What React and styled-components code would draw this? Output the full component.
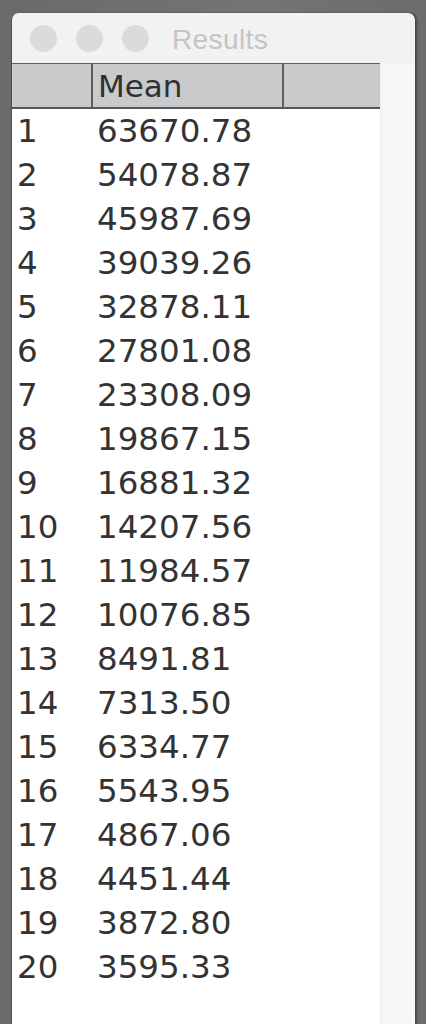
import React from "react";
import styled, { createGlobalStyle } from "styled-components";

const Global = createGlobalStyle`
  html, body { margin: 0; padding: 0; }
  body {
    background: linear-gradient(90deg, #6a6a6a 0%, #747474 60%, #6c6c6c 100%);
    height: 1024px;
    overflow: hidden;
    font-family: "DejaVu Sans", Verdana, sans-serif;
  }
`;

const Stage = styled.div`
  height: 1024px;
  padding: 13px 11px 0 11px;
  box-sizing: border-box;
`;

const Window = styled.div`
  width: 404px;
  height: 1011px;
  background: #f2f2f2;
  border-radius: 7px 7px 0 0;
  border-left: 1px solid #4e4e4e;
  box-shadow: 2px 0 2px rgba(40, 40, 40, 0.55);
  display: flex;
  flex-direction: column;
  overflow: hidden;
  box-sizing: border-box;
`;

const TitleBar = styled.div`
  height: 50px;
  display: flex;
  align-items: center;
  padding-left: 18px;
  gap: 19px;
  flex-shrink: 0;
`;

const Light = styled.span`
  width: 27px;
  height: 27px;
  border-radius: 50%;
  background: #dbdbdc;
  flex-shrink: 0;
`;

const Title = styled.span`
  margin-left: 4px;
  font-family: "Liberation Sans", Arial, sans-serif;
  font-size: 28px;
  letter-spacing: 0.4px;
  color: #c4c4c5;
  line-height: 1;
  padding-top: 4px;
`;

const Body = styled.div`
  flex: 1;
  display: flex;
  min-height: 0;
`;

const Table = styled.div`
  width: 368px;
  background: #ffffff;
  display: flex;
  flex-direction: column;
`;

const Strip = styled.div`
  flex: 1;
  background: #f6f6f6;
  border-left: 1px solid #ececec;
`;

const Header = styled.div`
  height: 46px;
  box-sizing: border-box;
  display: grid;
  grid-template-columns: 79px 2px 189px 2px 1fr;
  background: #c8cacc;
  border-top: 1px solid #5e6062;
  border-bottom: 2px solid #55585a;
`;

const Divider = styled.div`
  background: #5c5e60;
`;

const HeadCell = styled.div`
  display: flex;
  align-items: center;
  padding-left: 5px;
  font-size: 31px;
  color: #2f3032;
`;

const Row = styled.div`
  height: 44px;
  display: grid;
  grid-template-columns: 85px 1fr;
  align-items: center;
  font-size: 32.5px;
  color: #333333;
  line-height: 1;
`;

const Idx = styled.span`
  padding-left: 5px;
`;

const Val = styled.span``;

const data = [
  "63670.78", "54078.87", "45987.69", "39039.26", "32878.11",
  "27801.08", "23308.09", "19867.15", "16881.32", "14207.56",
  "11984.57", "10076.85", "8491.81", "7313.50", "6334.77",
  "5543.95", "4867.06", "4451.44", "3872.80", "3595.33",
];

export default function App() {
  return (
    <>
      <Global />
      <Stage>
        <Window>
          <TitleBar>
            <Light />
            <Light />
            <Light />
            <Title>Results</Title>
          </TitleBar>
          <Body>
            <Table>
              <Header>
                <HeadCell />
                <Divider />
                <HeadCell>Mean</HeadCell>
                <Divider />
                <HeadCell />
              </Header>
              {data.map((v, i) => (
                <Row key={i}>
                  <Idx>{i + 1}</Idx>
                  <Val>{v}</Val>
                </Row>
              ))}
            </Table>
            <Strip />
          </Body>
        </Window>
      </Stage>
    </>
  );
}
